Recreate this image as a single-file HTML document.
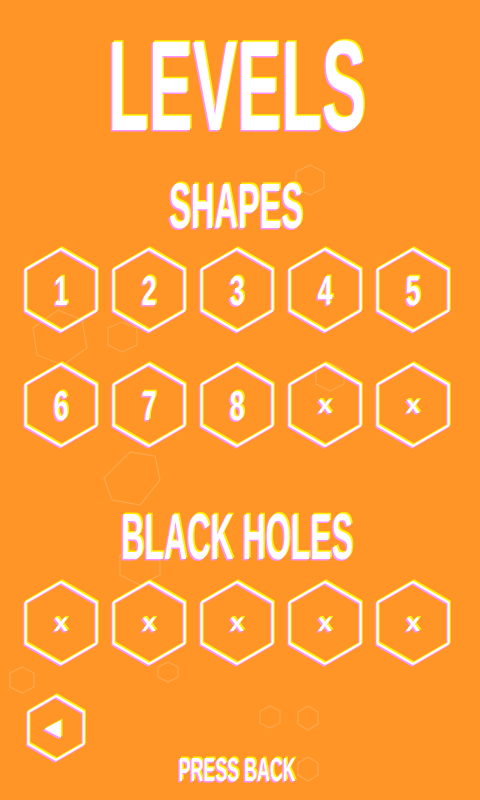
<!DOCTYPE html>
<html><head><meta charset="utf-8"><style>
html,body{margin:0;padding:0;background:#FF9526;width:480px;height:800px;overflow:hidden}
svg{display:block}
text{font-family:"Liberation Sans Narrow","Liberation Sans",sans-serif;font-weight:bold;text-anchor:middle}
</style></head><body>
<svg width="480" height="800" viewBox="0 0 480 800" xmlns="http://www.w3.org/2000/svg">
<defs>
<polygon id="h" points="0,-41 35.5,-20.5 35.5,20.5 0,41 -35.5,20.5 -35.5,-20.5" fill="none"/>
<polygon id="hs" points="0,-32 27.7,-16 27.7,16 0,32 -27.7,16 -27.7,-16" fill="none"/>
</defs>
<rect width="480" height="800" fill="#FF9526"/>
<g fill="none" stroke="#FFB060" stroke-width="1.2" opacity="0.7">
<polygon points="310,165 324,172 324,188 310,195 296,188 296,172"/>
<polygon points="58,310 82,320 87,348 63,365 37,355 33,328"/>
<polygon points="122,322 137,328 137,345 122,352 108,345 108,328"/>
<polygon points="330,363 344,370 344,384 330,391 316,384 316,370"/>
<polygon points="130,452 155,456 160,480 140,505 112,500 104,478"/>
<polygon points="140,545 160,555 160,575 140,585 120,575 120,555"/>
<polygon points="168,662 178,667 178,677 168,682 158,677 158,667"/>
<polygon points="22,667 34,673 34,687 22,693 10,687 10,673"/>
<polygon points="270,706 280,711 280,723 270,728 260,723 260,711"/>
<polygon points="308,706 318,712 318,724 308,730 298,724 298,712"/>
<polygon points="308,757 318,763 318,775 308,781 298,775 298,763"/>
</g>
<g stroke-width="2.2">
<g id="hexes">
<use href="#h" x="61" y="290"/><use href="#h" x="149" y="290"/><use href="#h" x="237" y="290"/><use href="#h" x="325" y="290"/><use href="#h" x="413" y="290"/>
<use href="#h" x="61" y="405"/><use href="#h" x="149" y="405"/><use href="#h" x="237" y="405"/><use href="#h" x="325" y="405"/><use href="#h" x="413" y="405"/>
<use href="#h" x="61" y="623"/><use href="#h" x="149" y="623"/><use href="#h" x="237" y="623"/><use href="#h" x="325" y="623"/><use href="#h" x="413" y="623"/>
<use href="#hs" x="56" y="728"/>
</g>
<use href="#hexes" x="1" y="-1.5" stroke="#FFF000"/>
<use href="#hexes" x="-1" y="1.5" stroke="#FF90FF"/>
<use href="#hexes" stroke="#FFFFFF"/>
</g>
<g id="txt">
<text x="237" y="130" font-size="128" textLength="258" lengthAdjust="spacingAndGlyphs">LEVELS</text>
<text x="236" y="228" font-size="64" textLength="134" lengthAdjust="spacingAndGlyphs">SHAPES</text>
<text x="237" y="559" font-size="65" textLength="232" lengthAdjust="spacingAndGlyphs">BLACK HOLES</text>
<text x="237" y="781" font-size="33" textLength="117" lengthAdjust="spacingAndGlyphs">PRESS BACK</text>
<g font-size="42">
<text x="61" y="305" textLength="14" lengthAdjust="spacingAndGlyphs">1</text><text x="149" y="305" textLength="15" lengthAdjust="spacingAndGlyphs">2</text><text x="237" y="305" textLength="15" lengthAdjust="spacingAndGlyphs">3</text><text x="325" y="305" textLength="15" lengthAdjust="spacingAndGlyphs">4</text><text x="413" y="305" textLength="15" lengthAdjust="spacingAndGlyphs">5</text>
<text x="61" y="420" textLength="15" lengthAdjust="spacingAndGlyphs">6</text><text x="149" y="420" textLength="15" lengthAdjust="spacingAndGlyphs">7</text><text x="237" y="420" textLength="15" lengthAdjust="spacingAndGlyphs">8</text>
</g>
<g font-size="26" font-weight="normal">
<text x="325" y="413">x</text><text x="413" y="413">x</text>
<text x="61" y="631">x</text><text x="149" y="631">x</text><text x="237" y="631">x</text><text x="325" y="631">x</text><text x="413" y="631">x</text>
</g>
<polygon points="44,729 61,720 61,738" stroke="none"/>
</g>
<use href="#txt" x="1.5" y="-1.5" fill="#FFF000"/>
<use href="#txt" x="-1.5" y="1.5" fill="#FF90FF"/>
<use href="#txt" fill="#FFFFFF"/>
</svg>
</body></html>
